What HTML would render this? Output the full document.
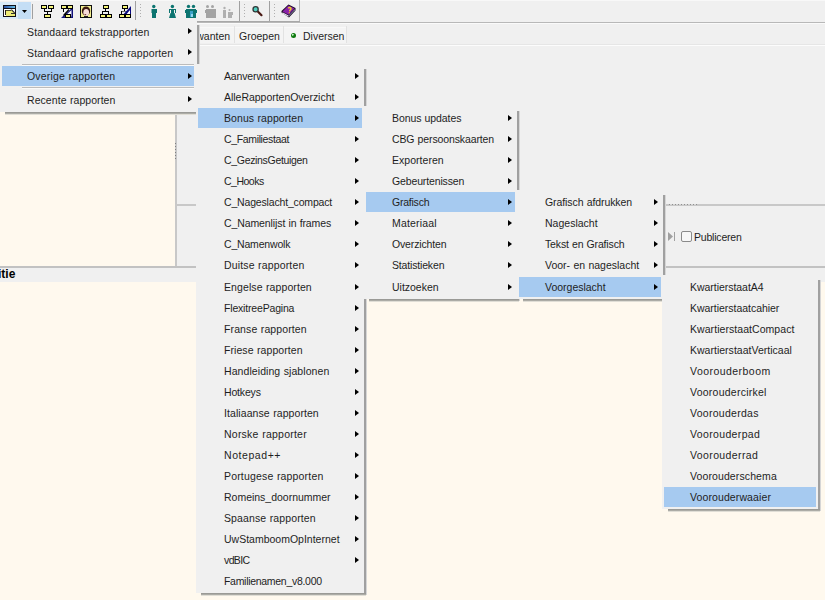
<!DOCTYPE html><html><head><meta charset="utf-8"><style>
*{margin:0;padding:0;box-sizing:border-box}
html,body{width:825px;height:600px;overflow:hidden;background:#f0f0f0;font-family:"Liberation Sans", sans-serif;font-size:10.5px;color:#000}
.a{position:absolute}
.menu{position:absolute;background:#f0f0f0}
.shr{position:absolute;background:linear-gradient(90deg,#a0a0a0 0 2px,#d6d6d6 2px)}
.shb{position:absolute;background:linear-gradient(180deg,#9a9a96 0 1px,#acaca6 1px 2px,#e0ded6 2px)}
.hl{position:absolute;background:#a6caf0}
.it{position:absolute;height:20px;line-height:20px;white-space:nowrap;letter-spacing:0px;word-spacing:0.4px;color:#1e1e1e}
.sep{position:absolute;height:1px;background:#bcbcbc}
.sepw{position:absolute;height:1px;background:#fafafa}
</style></head><body>
<div class="a" style="left:0;top:0;width:825px;height:21px;background:#f0f0f0"></div>
<div class="a" style="left:0;top:0;width:825px;height:1px;background:#f8f8f8"></div>
<div class="a" style="left:0;top:21px;width:300px;height:1px;background:#a8a8a8"></div>
<div class="a" style="left:0;top:22px;width:825px;height:1px;background:#b8b8b8"></div>
<div class="a" style="left:0;top:23px;width:825px;height:1px;background:#fafafa"></div>
<svg class="a" style="left:0;top:0" width="300" height="22" shape-rendering="crispEdges">
<!-- button highlight -->
<rect x="0" y="2" width="18" height="17" fill="#d9ebf9"/>
<rect x="18" y="2" width="13" height="17" fill="#c4def5"/>
<!-- window icon -->
<rect x="3" y="5" width="13" height="12" fill="#101018"/>
<defs><linearGradient id="tg" x1="0" x2="1"><stop offset="0" stop-color="#2850a8"/><stop offset="1" stop-color="#68c0e8"/></linearGradient></defs>
<rect x="4" y="6" width="11" height="2" fill="url(#tg)"/>
<rect x="4" y="9" width="11" height="7" fill="#fff"/>
<polygon points="6,10 11,10 15,13 15,16 6,16" fill="#ecec78"/>
<rect x="5" y="10" width="1" height="5" fill="#202020"/>
<rect x="6" y="10" width="5" height="1" fill="#505030"/>
<polygon points="10.5,9.6 12,9.6 15,12.6 15,14" fill="#202020" shape-rendering="auto"/>
<rect x="11" y="13" width="4" height="1" fill="#303030"/>
<!-- dropdown arrow -->
<polygon points="22,10 27,10 24.5,13" fill="#000" shape-rendering="auto"/>
<!-- separators -->
<rect x="32" y="4" width="1" height="15" fill="#a0a0a0"/>
<!-- pedigree icon 1 -->
<g>
<rect x="41" y="5" width="6" height="4" fill="#000"/><rect x="42" y="6" width="4" height="2" fill="#f5f57a"/>
<rect x="48" y="5" width="6" height="4" fill="#000"/><rect x="49" y="6" width="4" height="2" fill="#f5f57a"/>
<rect x="44" y="9" width="1" height="3" fill="#000"/><rect x="51" y="9" width="1" height="3" fill="#000"/>
<rect x="44" y="11" width="8" height="1" fill="#000"/><rect x="47" y="11" width="1" height="3" fill="#000"/>
<rect x="44" y="14" width="7" height="4" fill="#000"/><rect x="45" y="15" width="5" height="2" fill="#f5f57a"/>
</g>
<!-- pedigree icon 2 with blue -->
<g>
<polygon points="61,18 73,18 73,7" fill="#10107a" shape-rendering="auto"/>
<polygon points="64.5,16.5 71.5,16.5 71.5,10" fill="#f8f8ff" shape-rendering="auto"/>
<rect x="61" y="5" width="6" height="4" fill="#000"/><rect x="62" y="6" width="4" height="2" fill="#f2f080"/>
<rect x="67" y="5" width="6" height="4" fill="#000"/><rect x="68" y="6" width="4" height="2" fill="#f2f080"/>
<rect x="63" y="9" width="1" height="3" fill="#000"/>
<rect x="64" y="10" width="4" height="1" fill="#f8f8ff"/>
<line x1="69" y1="9.5" x2="63.5" y2="15.5" stroke="#000" stroke-width="1.2" shape-rendering="auto"/>
<rect x="65" y="14" width="6" height="4" fill="#000"/><rect x="66" y="15" width="4" height="2" fill="#f2f080"/>
</g>
<!-- face icon -->
<g>
<rect x="80" y="5" width="12" height="13" fill="#101010"/>
<rect x="81" y="6" width="10" height="11" fill="#f2ee90"/>
<g shape-rendering="auto">
<ellipse cx="86" cy="11" rx="4.2" ry="4.6" fill="#3a1810"/>
<ellipse cx="86.2" cy="12.4" rx="2.9" ry="3.5" fill="#f8dcd8"/>
<ellipse cx="85.3" cy="14.6" rx="1" ry="0.6" fill="#703838"/>
<rect x="84" y="16" width="4" height="1" fill="#202020"/>
</g>
</g>
<!-- org icon -->
<g>
<rect x="103" y="5" width="6" height="4" fill="#000"/><rect x="104" y="6" width="4" height="2" fill="#f5f57a"/>
<rect x="105" y="9" width="1" height="2" fill="#000"/>
<rect x="102" y="11" width="7" height="1" fill="#000"/>
<rect x="102" y="11" width="1" height="3" fill="#000"/><rect x="108" y="11" width="1" height="3" fill="#000"/>
<rect x="100" y="14" width="6" height="4" fill="#000"/><rect x="101" y="15" width="4" height="2" fill="#f5f57a"/>
<rect x="106" y="14" width="6" height="4" fill="#000"/><rect x="107" y="15" width="4" height="2" fill="#f5f57a"/>
</g>
<!-- org icon 2 with blue -->
<g>
<rect x="122" y="5" width="6" height="4" fill="#000"/><rect x="123" y="6" width="4" height="2" fill="#f5f57a"/>
<rect x="124" y="9" width="1" height="2" fill="#000"/>
<rect x="121" y="11" width="7" height="1" fill="#707070"/>
<rect x="121" y="11" width="1" height="3" fill="#000"/>
<polygon points="122,16 131,6 131,16" fill="#0a0a80" shape-rendering="auto"/>
<polygon points="125,16 130,10 130,16" fill="#fff" shape-rendering="auto"/>
<rect x="119" y="14" width="6" height="4" fill="#000"/><rect x="120" y="15" width="4" height="2" fill="#f5f57a"/>
<rect x="125" y="14" width="6" height="4" fill="#000"/><rect x="126" y="15" width="4" height="2" fill="#f5f57a"/>
</g>
<rect x="135" y="1" width="1" height="19" fill="#a0a0a0"/>
<g fill="#b0b0b0"><rect x="140" y="4" width="1" height="1"/><rect x="140" y="7" width="1" height="1"/><rect x="140" y="10" width="1" height="1"/><rect x="140" y="13" width="1" height="1"/><rect x="140" y="16" width="1" height="1"/></g>
<!-- man -->
<g fill="#0c7470">
<circle cx="153.8" cy="6.5" r="1.7" shape-rendering="auto"/>
<rect x="152" y="9" width="4" height="9"/>
<rect x="156" y="9" width="1" height="4"/>
</g>
<rect x="151" y="9" width="1" height="4" fill="#7fb0b0"/>
<rect x="153.6" y="13" width="0.8" height="5" fill="#5aa8a8"/>
<!-- woman -->
<g fill="#0c7470">
<circle cx="172.4" cy="6.5" r="1.7" shape-rendering="auto"/>
<rect x="171" y="9" width="3" height="5"/>
<rect x="169" y="9" width="1" height="4"/><rect x="175" y="9" width="1" height="4"/>
<rect x="170" y="9" width="5" height="1"/>
<polygon points="170.5,13 174.5,13 176,18 169,18" shape-rendering="auto"/>
</g>
<!-- couple -->
<g fill="#0c7470">
<circle cx="188.5" cy="6.4" r="1.7" shape-rendering="auto"/><circle cx="193.5" cy="6.4" r="1.7" shape-rendering="auto"/>
<rect x="186" y="9" width="10" height="9"/>
<rect x="185" y="10" width="1" height="3"/><rect x="196" y="10" width="1" height="3"/>
</g>
<rect x="190" y="11" width="3" height="6" fill="#3aa0c8"/>
<rect x="191" y="14" width="2" height="3" fill="#8fd8f0"/>
<!-- gray couple -->
<g fill="#a4a4a4">
<circle cx="207.5" cy="6.4" r="1.5" shape-rendering="auto"/><circle cx="212.5" cy="6.4" r="1.5" shape-rendering="auto"/>
<rect x="206" y="9" width="10" height="9"/>
<rect x="205" y="10" width="1" height="3"/>
</g>
<!-- gray person child -->
<g fill="#b0b0b0">
<circle cx="224.5" cy="8" r="1.2" shape-rendering="auto"/>
<rect x="223" y="10" width="3" height="8"/>
<circle cx="229.5" cy="10" r="1" shape-rendering="auto"/>
<rect x="228" y="12" width="4" height="6"/>
<rect x="232" y="12" width="1" height="3"/>
</g>
<rect x="239" y="1" width="1" height="20" fill="#a0a0a0"/>
<g fill="#b0b0b0"><rect x="244" y="4" width="1" height="1"/><rect x="244" y="7" width="1" height="1"/><rect x="244" y="10" width="1" height="1"/><rect x="244" y="13" width="1" height="1"/><rect x="244" y="16" width="1" height="1"/></g>
<!-- magnifier -->
<g shape-rendering="auto">
<line x1="257.8" y1="11.5" x2="261.5" y2="15.2" stroke="#4a1a14" stroke-width="2.2" stroke-linecap="round"/>
<circle cx="255.6" cy="9.2" r="2.6" fill="#50d0c0" stroke="#303838" stroke-width="1.3"/>
</g>
<rect x="269" y="1" width="1" height="20" fill="#a0a0a0"/>
<g fill="#b0b0b0"><rect x="274" y="4" width="1" height="1"/><rect x="274" y="7" width="1" height="1"/><rect x="274" y="10" width="1" height="1"/><rect x="274" y="13" width="1" height="1"/><rect x="274" y="16" width="1" height="1"/></g>
<!-- book -->
<g shape-rendering="auto">
<polygon points="281.5,12.5 289,17.5 295.5,10.5 295.5,8 288.5,4.5 281.5,11" fill="#1a0a20"/>
<polygon points="282.5,11.5 288.5,5.5 294.5,8.5 288.5,14.8" fill="#8a22a8"/>
<polygon points="282.5,12.2 288.5,15.5 288.5,16.8 282.5,13.5" fill="#e8e0f0"/>
<polygon points="288.8,15.3 294.8,9 294.8,10.2 288.8,16.6" fill="#8080a8"/>
<path d="M288.2,8.2 Q289.8,6.8 291,8.2 Q291.3,9.6 289.8,10.4 L289.6,11.4" fill="none" stroke="#f0d028" stroke-width="1.4"/>
<circle cx="289.3" cy="12.8" r="0.7" fill="#e8b030"/>
</g>
<rect x="299" y="0" width="1" height="21" fill="#b8b8b8"/>
</svg>

<div class="a" style="left:0;top:44px;width:825px;height:1px;background:#e6e6e6"></div>
<div class="a" style="left:0;top:45px;width:825px;height:1px;background:#fcfcfc"></div>
<div class="a" style="left:150px;top:27px;width:84px;height:16px;background:#f4f4f4;border-top:1px solid #f8f8f8"></div>
<div class="a" style="left:235px;top:27px;width:48px;height:16px;background:#f4f4f4;border-top:1px solid #f8f8f8"></div>
<div class="a" style="left:284px;top:27px;width:62px;height:16px;background:#f4f4f4;border-top:1px solid #f8f8f8"></div>
<div class="it a" style="left:163px;top:26px;">Aanverwanten</div>
<div class="a" style="left:234px;top:26px;width:1px;height:17px;background:#e2e2e2"></div>
<div class="it a" style="left:239px;top:26px;">Groepen</div>
<div class="a" style="left:283px;top:26px;width:1px;height:17px;background:#e2e2e2"></div>
<div class="a" style="left:291px;top:33px;width:5px;height:5px;border-radius:50%;background:radial-gradient(circle at 35% 35%,#c8f0c8 0 0.6px,#108010 1.2px,#0a6a0a)"></div>
<div class="it a" style="left:303px;top:26px;">Diversen</div>
<div class="a" style="left:346px;top:26px;width:1px;height:17px;background:#e2e2e2"></div>
<div class="a" style="left:0;top:46px;width:175px;height:220px;background:#fff9ee"></div>
<div class="a" style="left:175px;top:46px;width:2px;height:220px;background:#c8c8c8"></div>
<div class="a" style="left:175px;top:143px;width:1px;height:18px;background:repeating-linear-gradient(180deg,#808080 0 1px,transparent 1px 3px)"></div>
<div class="a" style="left:177px;top:204px;width:648px;height:2px;background:#c8c8c8"></div>
<div class="a" style="left:669px;top:204px;width:28px;height:1px;background:repeating-linear-gradient(90deg,#909090 0 1px,#d8d8d8 1px 3px)"></div>
<div class="a" style="left:0;top:266px;width:825px;height:2px;background:#c2c2c2"></div>
<div class="a" style="left:0;top:282px;width:825px;height:318px;background:#fff9ee"></div>
<div class="a" style="left:-24px;top:267px;height:15px;line-height:15px;font-weight:bold;font-size:12px;color:#000">Positie</div>
<svg class="a" style="left:668px;top:232px" width="8" height="10"><polygon points="0,0 5,4.5 0,9" fill="#a0a0a0"/><rect x="6" y="0" width="1" height="9" fill="#a0a0a0"/></svg>
<div class="a" style="left:681px;top:231px;width:11px;height:11px;border:1px solid #8a8a8a;border-radius:2px;background:#f7f7f7"></div>
<div class="it a" style="left:694px;top:227px;letter-spacing:-0.2px">Publiceren</div>
<div class="shr" style="left:197px;top:25px;width:3px;height:89px"></div>
<div class="shb" style="left:5px;top:112px;width:194px;height:3px"></div>
<div class="menu" style="left:0px;top:20px;width:197px;height:92px">
<div class="it" style="left:27px;top:2px;letter-spacing:0.152px">Standaard tekstrapporten</div>
<svg style="position:absolute;left:188px;top:8px" width="4" height="6"><polygon points="0,0 4,3 0,6" fill="#000"/></svg>
<div class="it" style="left:27px;top:23px;letter-spacing:0.125px">Standaard grafische rapporten</div>
<svg style="position:absolute;left:188px;top:29px" width="4" height="6"><polygon points="0,0 4,3 0,6" fill="#000"/></svg>
<div class="sep" style="left:22px;top:44px;width:172px"></div><div class="sepw" style="left:22px;top:45px;width:172px"></div>
<div class="hl" style="left:2px;top:46px;width:192px;height:20px"></div>
<div class="it" style="left:27px;top:46px;letter-spacing:0.188px">Overige rapporten</div>
<svg style="position:absolute;left:188px;top:53px" width="4" height="6"><polygon points="0,0 4,3 0,6" fill="#000"/></svg>
<div class="sep" style="left:22px;top:67px;width:172px"></div><div class="sepw" style="left:22px;top:68px;width:172px"></div>
<div class="it" style="left:27px;top:70px;letter-spacing:0.062px">Recente rapporten</div>
<svg style="position:absolute;left:188px;top:76px" width="4" height="6"><polygon points="0,0 4,3 0,6" fill="#000"/></svg>
</div>
<div class="shr" style="left:364px;top:69px;width:3px;height:526px"></div>
<div class="shb" style="left:201px;top:593px;width:165px;height:3px"></div>
<div class="menu" style="left:196px;top:64px;width:168px;height:529px">
<div class="it" style="left:28px;top:2px;letter-spacing:-0.145px">Aanverwanten</div>
<svg style="position:absolute;left:159px;top:9px" width="4" height="6"><polygon points="0,0 4,3 0,6" fill="#000"/></svg>
<div class="it" style="left:28px;top:23px;letter-spacing:-0.024px">AlleRapportenOverzicht</div>
<svg style="position:absolute;left:159px;top:30px" width="4" height="6"><polygon points="0,0 4,3 0,6" fill="#000"/></svg>
<div class="hl" style="left:2px;top:44px;width:164px;height:20px"></div>
<div class="it" style="left:28px;top:44px;letter-spacing:0.071px">Bonus rapporten</div>
<svg style="position:absolute;left:159px;top:51px" width="4" height="6"><polygon points="0,0 4,3 0,6" fill="#000"/></svg>
<div class="it" style="left:28px;top:65px;letter-spacing:-0.354px">C_Familiestaat</div>
<svg style="position:absolute;left:159px;top:72px" width="4" height="6"><polygon points="0,0 4,3 0,6" fill="#000"/></svg>
<div class="it" style="left:28px;top:86px;letter-spacing:-0.32px">C_GezinsGetuigen</div>
<svg style="position:absolute;left:159px;top:93px" width="4" height="6"><polygon points="0,0 4,3 0,6" fill="#000"/></svg>
<div class="it" style="left:28px;top:107px;letter-spacing:-0.5px">C_Hooks</div>
<svg style="position:absolute;left:159px;top:114px" width="4" height="6"><polygon points="0,0 4,3 0,6" fill="#000"/></svg>
<div class="it" style="left:28px;top:128px;letter-spacing:-0.168px">C_Nageslacht_compact</div>
<svg style="position:absolute;left:159px;top:135px" width="4" height="6"><polygon points="0,0 4,3 0,6" fill="#000"/></svg>
<div class="it" style="left:28px;top:149px;letter-spacing:-0.1px">C_Namenlijst in frames</div>
<svg style="position:absolute;left:159px;top:156px" width="4" height="6"><polygon points="0,0 4,3 0,6" fill="#000"/></svg>
<div class="it" style="left:28px;top:170px;letter-spacing:-0.18px">C_Namenwolk</div>
<svg style="position:absolute;left:159px;top:177px" width="4" height="6"><polygon points="0,0 4,3 0,6" fill="#000"/></svg>
<div class="it" style="left:28px;top:191px;letter-spacing:0.147px">Duitse rapporten</div>
<svg style="position:absolute;left:159px;top:198px" width="4" height="6"><polygon points="0,0 4,3 0,6" fill="#000"/></svg>
<div class="it" style="left:28px;top:213px;letter-spacing:0.094px">Engelse rapporten</div>
<svg style="position:absolute;left:159px;top:220px" width="4" height="6"><polygon points="0,0 4,3 0,6" fill="#000"/></svg>
<div class="it" style="left:28px;top:234px;letter-spacing:-0.179px">FlexitreePagina</div>
<svg style="position:absolute;left:159px;top:241px" width="4" height="6"><polygon points="0,0 4,3 0,6" fill="#000"/></svg>
<div class="it" style="left:28px;top:255px;letter-spacing:0.113px">Franse rapporten</div>
<svg style="position:absolute;left:159px;top:262px" width="4" height="6"><polygon points="0,0 4,3 0,6" fill="#000"/></svg>
<div class="it" style="left:28px;top:276px;letter-spacing:0.073px">Friese rapporten</div>
<svg style="position:absolute;left:159px;top:283px" width="4" height="6"><polygon points="0,0 4,3 0,6" fill="#000"/></svg>
<div class="it" style="left:28px;top:297px;letter-spacing:0.075px">Handleiding sjablonen</div>
<svg style="position:absolute;left:159px;top:304px" width="4" height="6"><polygon points="0,0 4,3 0,6" fill="#000"/></svg>
<div class="it" style="left:28px;top:318px;letter-spacing:-0.167px">Hotkeys</div>
<svg style="position:absolute;left:159px;top:325px" width="4" height="6"><polygon points="0,0 4,3 0,6" fill="#000"/></svg>
<div class="it" style="left:28px;top:339px;letter-spacing:0.079px">Italiaanse rapporten</div>
<svg style="position:absolute;left:159px;top:346px" width="4" height="6"><polygon points="0,0 4,3 0,6" fill="#000"/></svg>
<div class="it" style="left:28px;top:360px;letter-spacing:0.233px">Norske rapporter</div>
<svg style="position:absolute;left:159px;top:367px" width="4" height="6"><polygon points="0,0 4,3 0,6" fill="#000"/></svg>
<div class="it" style="left:28px;top:381px;letter-spacing:0.562px">Notepad++</div>
<svg style="position:absolute;left:159px;top:388px" width="4" height="6"><polygon points="0,0 4,3 0,6" fill="#000"/></svg>
<div class="it" style="left:28px;top:402px;letter-spacing:0.172px">Portugese rapporten</div>
<svg style="position:absolute;left:159px;top:409px" width="4" height="6"><polygon points="0,0 4,3 0,6" fill="#000"/></svg>
<div class="it" style="left:28px;top:423px;letter-spacing:-0.012px">Romeins_doornummer</div>
<svg style="position:absolute;left:159px;top:430px" width="4" height="6"><polygon points="0,0 4,3 0,6" fill="#000"/></svg>
<div class="it" style="left:28px;top:444px;letter-spacing:0.119px">Spaanse rapporten</div>
<svg style="position:absolute;left:159px;top:451px" width="4" height="6"><polygon points="0,0 4,3 0,6" fill="#000"/></svg>
<div class="it" style="left:28px;top:465px;letter-spacing:0.0px">UwStamboomOpInternet</div>
<svg style="position:absolute;left:159px;top:472px" width="4" height="6"><polygon points="0,0 4,3 0,6" fill="#000"/></svg>
<div class="it" style="left:28px;top:486px;letter-spacing:-0.625px">vdBIC</div>
<svg style="position:absolute;left:159px;top:493px" width="4" height="6"><polygon points="0,0 4,3 0,6" fill="#000"/></svg>
<div class="it" style="left:28px;top:507px;letter-spacing:-0.294px">Familienamen_v8.000</div>
</div>
<div class="shr" style="left:517px;top:111px;width:3px;height:190px"></div>
<div class="shb" style="left:369px;top:299px;width:150px;height:3px"></div>
<div class="menu" style="left:364px;top:106px;width:153px;height:193px">
<div class="it" style="left:28px;top:2px;letter-spacing:-0.083px">Bonus updates</div>
<svg style="position:absolute;left:144px;top:9px" width="4" height="6"><polygon points="0,0 4,3 0,6" fill="#000"/></svg>
<div class="it" style="left:28px;top:23px;letter-spacing:-0.117px">CBG persoonskaarten</div>
<svg style="position:absolute;left:144px;top:30px" width="4" height="6"><polygon points="0,0 4,3 0,6" fill="#000"/></svg>
<div class="it" style="left:28px;top:44px;letter-spacing:0.033px">Exporteren</div>
<svg style="position:absolute;left:144px;top:51px" width="4" height="6"><polygon points="0,0 4,3 0,6" fill="#000"/></svg>
<div class="it" style="left:28px;top:65px;letter-spacing:-0.138px">Gebeurtenissen</div>
<svg style="position:absolute;left:144px;top:72px" width="4" height="6"><polygon points="0,0 4,3 0,6" fill="#000"/></svg>
<div class="hl" style="left:2px;top:86px;width:149px;height:20px"></div>
<div class="it" style="left:28px;top:86px;letter-spacing:-0.229px">Grafisch</div>
<svg style="position:absolute;left:144px;top:93px" width="4" height="6"><polygon points="0,0 4,3 0,6" fill="#000"/></svg>
<div class="it" style="left:28px;top:107px;letter-spacing:0.163px">Materiaal</div>
<svg style="position:absolute;left:144px;top:114px" width="4" height="6"><polygon points="0,0 4,3 0,6" fill="#000"/></svg>
<div class="it" style="left:28px;top:128px;letter-spacing:-0.15px">Overzichten</div>
<svg style="position:absolute;left:144px;top:135px" width="4" height="6"><polygon points="0,0 4,3 0,6" fill="#000"/></svg>
<div class="it" style="left:28px;top:149px;letter-spacing:-0.164px">Statistieken</div>
<svg style="position:absolute;left:144px;top:156px" width="4" height="6"><polygon points="0,0 4,3 0,6" fill="#000"/></svg>
<div class="it" style="left:28px;top:171px;letter-spacing:-0.013px">Uitzoeken</div>
<svg style="position:absolute;left:144px;top:178px" width="4" height="6"><polygon points="0,0 4,3 0,6" fill="#000"/></svg>
</div>
<div class="shr" style="left:663px;top:195px;width:3px;height:106px"></div>
<div class="shb" style="left:523px;top:299px;width:142px;height:3px"></div>
<div class="menu" style="left:517px;top:190px;width:146px;height:109px">
<div class="it" style="left:28px;top:2px;letter-spacing:-0.082px">Grafisch afdrukken</div>
<svg style="position:absolute;left:137px;top:9px" width="4" height="6"><polygon points="0,0 4,3 0,6" fill="#000"/></svg>
<div class="it" style="left:28px;top:23px;letter-spacing:0.011px">Nageslacht</div>
<svg style="position:absolute;left:137px;top:30px" width="4" height="6"><polygon points="0,0 4,3 0,6" fill="#000"/></svg>
<div class="it" style="left:28px;top:44px;letter-spacing:-0.144px">Tekst en Grafisch</div>
<svg style="position:absolute;left:137px;top:51px" width="4" height="6"><polygon points="0,0 4,3 0,6" fill="#000"/></svg>
<div class="it" style="left:28px;top:65px;letter-spacing:0.0px">Voor- en nageslacht</div>
<svg style="position:absolute;left:137px;top:72px" width="4" height="6"><polygon points="0,0 4,3 0,6" fill="#000"/></svg>
<div class="hl" style="left:2px;top:87px;width:142px;height:20px"></div>
<div class="it" style="left:28px;top:87px;letter-spacing:-0.009px">Voorgeslacht</div>
<svg style="position:absolute;left:137px;top:94px" width="4" height="6"><polygon points="0,0 4,3 0,6" fill="#000"/></svg>
</div>
<div class="shr" style="left:818px;top:280px;width:3px;height:231px"></div>
<div class="shb" style="left:668px;top:509px;width:152px;height:3px"></div>
<div class="menu" style="left:662px;top:275px;width:156px;height:234px">
<div class="it" style="left:28px;top:2px;letter-spacing:-0.036px">KwartierstaatA4</div>
<div class="it" style="left:28px;top:23px;letter-spacing:-0.028px">Kwartierstaatcahier</div>
<div class="it" style="left:28px;top:44px;letter-spacing:0.058px">KwartierstaatCompact</div>
<div class="it" style="left:28px;top:65px;letter-spacing:0.014px">KwartierstaatVerticaal</div>
<div class="it" style="left:28px;top:86px;letter-spacing:0.458px">Voorouderboom</div>
<div class="it" style="left:28px;top:107px;letter-spacing:0.25px">Vooroudercirkel</div>
<div class="it" style="left:28px;top:128px;letter-spacing:0.282px">Voorouderdas</div>
<div class="it" style="left:28px;top:149px;letter-spacing:0.355px">Voorouderpad</div>
<div class="it" style="left:28px;top:170px;letter-spacing:0.382px">Voorouderrad</div>
<div class="it" style="left:28px;top:191px;letter-spacing:0.107px">Voorouderschema</div>
<div class="hl" style="left:2px;top:212px;width:152px;height:20px"></div>
<div class="it" style="left:28px;top:212px;letter-spacing:0.107px">Voorouderwaaier</div>
</div>
</body></html>
